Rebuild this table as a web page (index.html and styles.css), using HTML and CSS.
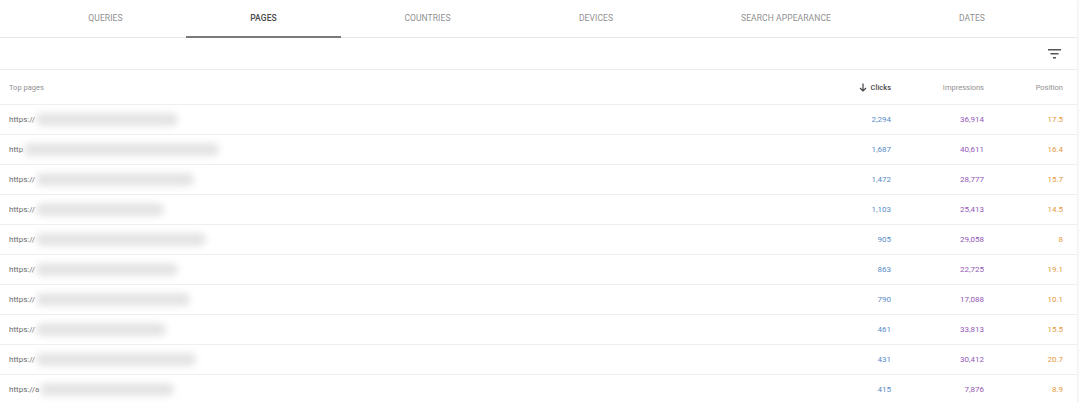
FILE: index.html
```html
<!DOCTYPE html>
<html>
<head>
<meta charset="utf-8">
<link rel="stylesheet" href="styles.css">
</head>
<body>
<div class="card">
  <nav class="tabs">
    <div class="tab">QUERIES</div>
    <div class="tab active">PAGES</div>
    <div class="tab">COUNTRIES</div>
    <div class="tab">DEVICES</div>
    <div class="tab">SEARCH APPEARANCE</div>
    <div class="tab">DATES</div>
  </nav>
  <div class="toolbar">
    <svg class="filter" width="13" height="10" viewBox="0 0 13 10"><rect x="0" y="0" width="13" height="1.5" fill="#555"/><rect x="2.5" y="4" width="8" height="1.5" fill="#555"/><rect x="5" y="8" width="3" height="1.5" fill="#555"/></svg>
  </div>
  <div class="row head">
    <div class="cell page">Top pages</div>
    <div class="cell num sorted"><svg width="8" height="9" viewBox="0 0 8 9"><path d="M4 0.5V8M1 5l3 3 3-3" fill="none" stroke="#444" stroke-width="1.2"/></svg>Clicks</div>
    <div class="cell num">Impressions</div>
    <div class="cell num">Position</div>
  </div>
  <div class="row"><div class="cell page">https://<span class="blur" style="width:142px"></span></div><div class="cell num clicks">2,294</div><div class="cell num imp">36,914</div><div class="cell num pos">17.5</div></div>
  <div class="row"><div class="cell page">http<span class="blur" style="width:195px"></span></div><div class="cell num clicks">1,687</div><div class="cell num imp">40,611</div><div class="cell num pos">16.4</div></div>
  <div class="row"><div class="cell page">https://<span class="blur" style="width:158px"></span></div><div class="cell num clicks">1,472</div><div class="cell num imp">28,777</div><div class="cell num pos">15.7</div></div>
  <div class="row"><div class="cell page">https://<span class="blur" style="width:128px"></span></div><div class="cell num clicks">1,103</div><div class="cell num imp">25,413</div><div class="cell num pos">14.5</div></div>
  <div class="row"><div class="cell page">https://<span class="blur" style="width:170px"></span></div><div class="cell num clicks">905</div><div class="cell num imp">29,058</div><div class="cell num pos">8</div></div>
  <div class="row"><div class="cell page">https://<span class="blur" style="width:142px"></span></div><div class="cell num clicks">863</div><div class="cell num imp">22,725</div><div class="cell num pos">19.1</div></div>
  <div class="row"><div class="cell page">https://<span class="blur" style="width:154px"></span></div><div class="cell num clicks">790</div><div class="cell num imp">17,088</div><div class="cell num pos">10.1</div></div>
  <div class="row"><div class="cell page">https://<span class="blur" style="width:130px"></span></div><div class="cell num clicks">461</div><div class="cell num imp">33,813</div><div class="cell num pos">15.5</div></div>
  <div class="row"><div class="cell page">https://<span class="blur" style="width:160px"></span></div><div class="cell num clicks">431</div><div class="cell num imp">30,412</div><div class="cell num pos">20.7</div></div>
  <div class="row"><div class="cell page">https://a<span class="blur" style="width:134px"></span></div><div class="cell num clicks">415</div><div class="cell num imp">7,876</div><div class="cell num pos">8.9</div></div>
</div>
</body>
</html>
```

FILE: styles.css
```css
html, body {
  margin: 0;
  padding: 0;
  background: #fff;
  overflow: hidden;
}
body {
  font-family: Roboto, "Liberation Sans", Arial, sans-serif;
  color: #555;
}
.card {
  width: 1077px;
  height: 403px;
  background: #fff;
  box-shadow: 1px 0 2px rgba(0,0,0,0.08);
  overflow: hidden;
}
.tabs {
  display: grid;
  grid-template-columns: 161px 155px 173px 164px 216px 156px;
  padding-left: 25px;
  height: 38px;
  border-bottom: 1px solid #e8e8e8;
  box-sizing: border-box;
}
.tab {
  display: flex;
  align-items: center;
  justify-content: center;
  font-size: 8.5px;
  color: #909090;
  letter-spacing: 0.1px;
  padding-bottom: 3px;
  box-sizing: border-box;
  height: 38px;
}
.tab.active {
  color: #4a4a4a;
  font-weight: 500;
  border-bottom: 2px solid #7a7a7a;
  padding-bottom: 1px;
}
.toolbar {
  height: 32px;
  border-bottom: 1px solid #ebebeb;
  box-sizing: border-box;
  display: flex;
  align-items: center;
  justify-content: flex-end;
  padding-right: 16px;
}
.filter {
  display: block;
  margin-top: 1px;
}
.row {
  display: grid;
  grid-template-columns: 1fr 100px 93px 79px;
  padding: 0 14px 0 9px;
  height: 30px;
  border-bottom: 1px solid #efefef;
  box-sizing: border-box;
  align-items: center;
  font-size: 8px;
}
.row.head {
  height: 35px;
  font-size: 7.5px;
  color: #909090;
}
.cell.page {
  display: flex;
  align-items: center;
  color: #6a6a6a;
  white-space: nowrap;
}
.head .cell.page {
  color: #909090;
}
.blur {
  display: inline-block;
  height: 13px;
  margin-left: 1px;
  background: #e4e4e4;
  border-radius: 6px;
  filter: blur(3.5px);
}
.cell.num {
  text-align: right;
}
.sorted {
  display: flex;
  justify-content: flex-end;
  align-items: center;
  gap: 4px;
  color: #4a4a4a;
  font-weight: 500;
}
.clicks { color: #5a8cc8; }
.imp { color: #9357b6; }
.pos { color: #e39a40; }
```
